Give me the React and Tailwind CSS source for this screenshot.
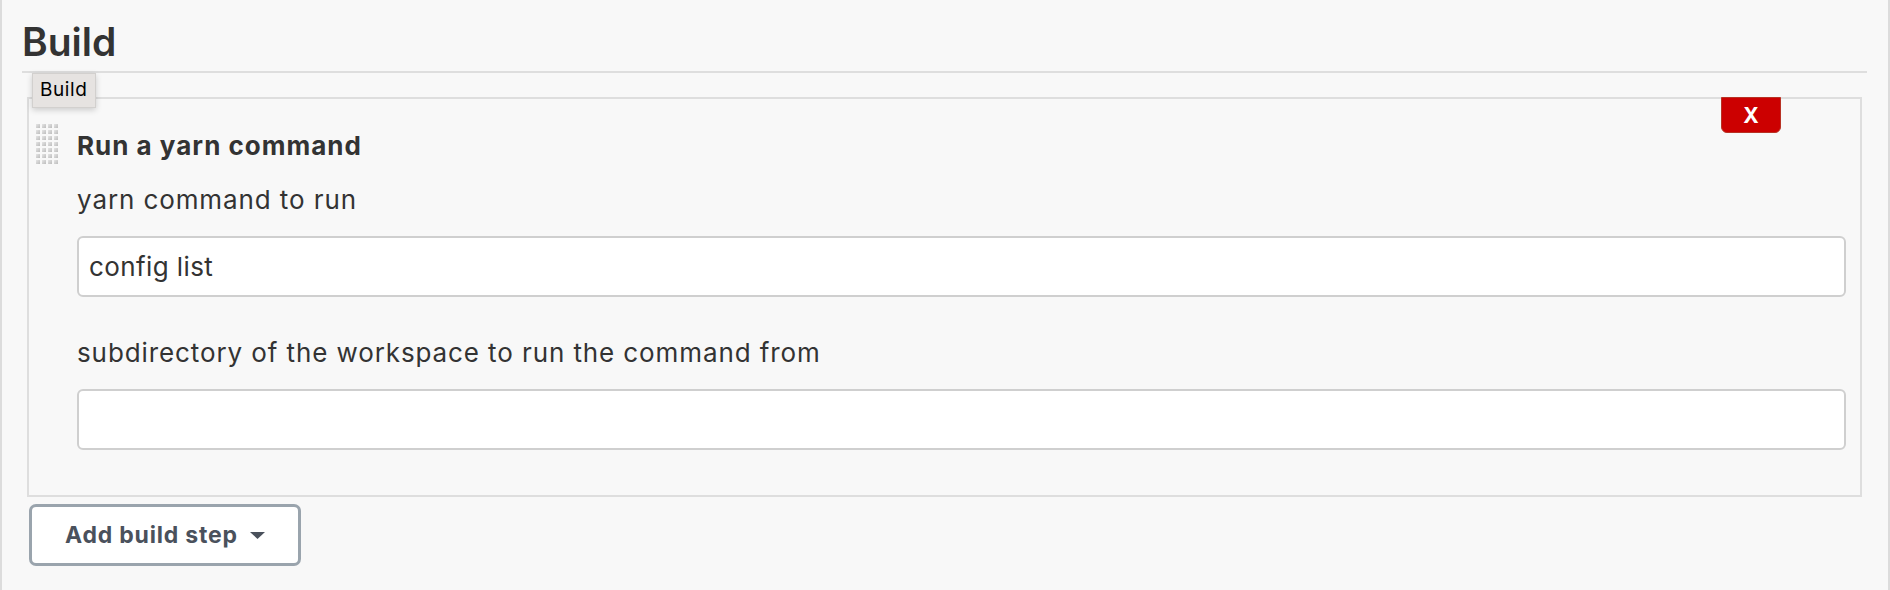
import React from 'react';

const font = { fontFamily: 'Inter, "Noto Sans", sans-serif' };

const DragHandle = () => {
  const dots = Array.from({ length: 28 });
  return (
    <div className="grid grid-cols-4 gap-[2px] w-[22px]">
      {dots.map((_, i) => (
        <span
          key={i}
          className="block w-[4px] h-[4px] bg-gradient-to-br from-[#e6e6e6] to-[#bdbdbd]"
        />
      ))}
    </div>
  );
};

const Field = ({ label, value, top }) => (
  <div className={top}>
    <label className="block text-[26px] leading-[30px] tracking-[0.9px] text-[#333]">{label}</label>
    <input
      type="text"
      defaultValue={value}
      className="mt-[21px] block w-full h-[61px] rounded-[6px] border-2 border-[#cfcfcf] bg-white pl-[10px] text-[26px] tracking-[0.4px] text-[#333] outline-none"
    />
  </div>
);

export default function App() {
  return (
    <div
      className="h-[590px] w-full bg-[#f8f8f8] border-l-2 border-r-2 border-[#dcdcdc] mr-[2px]"
      style={font}
    >
      <div className="pl-[20px] pr-[21px]">
        <h2 className="pt-[18px] pb-[5px] text-[39px] leading-[48px] font-semibold text-[#333] border-b-2 border-[#dedede]">
          Build
        </h2>

        <div className="relative mt-[24px] mx-[5px] border-2 border-[#dedede] pl-[48px] pr-[14px] pb-[45px]">
          {/* tooltip */}
          <div className="absolute left-[3px] top-[-26px] h-[35px] px-[7px] flex items-center bg-[#e6e3e1] border border-[#d2d0ce] shadow-[0_2px_6px_rgba(0,0,0,0.18)] text-[19px] tracking-[0.6px] text-black">
            Build
          </div>

          {/* delete */}
          <button className="absolute right-[79px] top-[-2px] w-[60px] h-[36px] rounded-b-[6px] bg-[#cc0000] border border-[#b83224] text-white text-[21px] font-bold leading-none">
            X
          </button>

          <div className="absolute left-[7px] top-[25px]">
            <DragHandle />
          </div>

          <div className="mt-[32px] text-[26px] leading-[30px] tracking-[1px] font-bold text-[#333]">
            Run a yarn command
          </div>

          <Field label="yarn command to run" value="config list" top="mt-[24px]" />
          <Field
            label="subdirectory of the workspace to run the command from"
            value=""
            top="mt-[41px]"
          />
        </div>

        <button className="mt-[7px] ml-[7px] h-[62px] flex items-center gap-[12px] pl-[33px] pr-[33px] bg-white border-[3px] border-[#9aa4ad] rounded-[7px] text-[23px] tracking-[0.8px] font-bold text-[#4a515c]">
          Add build step
          <svg width="15" height="7" viewBox="0 0 15 7">
            <path d="M0 0h15L7.5 7z" fill="#4a515c" />
          </svg>
        </button>
      </div>
    </div>
  );
}
